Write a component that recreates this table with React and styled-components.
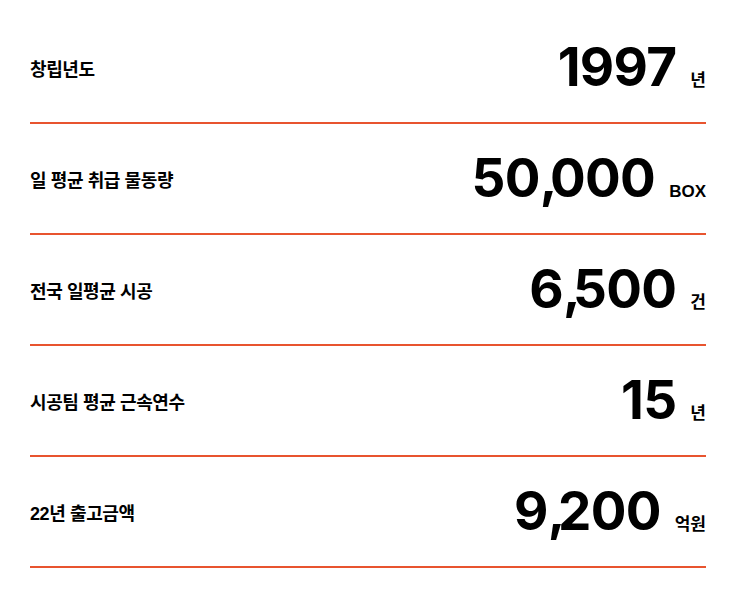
import React from "react";
import styled, { createGlobalStyle } from "styled-components";

const GlobalStyle = createGlobalStyle`
  html, body {
    margin: 0;
    padding: 0;
    background: #ffffff;
    font-family: Inter, "Noto Sans CJK KR", sans-serif;
    color: #000;
  }
`;

const stats = [
  { label: "창립년도", value: "1997", unit: "년" },
  { label: "일 평균 취급 물동량", value: "50,000", unit: "BOX" },
  { label: "전국 일평균 시공", value: "6,500", unit: "건" },
  { label: "시공팀 평균 근속연수", value: "15", unit: "년" },
  { label: "22년 출고금액", value: "9,200", unit: "억원" },
];

// commas in the number font sit tighter than Inter's default
const renderValue = (v) =>
  v.split(",").map((part, i) => (
    <React.Fragment key={i}>
      {i > 0 && <Comma>,</Comma>}
      {part}
    </React.Fragment>
  ));

export default function App() {
  return (
    <>
      <GlobalStyle />
      <List>
        {stats.map((s) => (
          <Row key={s.label}>
            <Label>{s.label}</Label>
            <Figure>
              <Value>{renderValue(s.value)}</Value>
              <Unit>{s.unit}</Unit>
            </Figure>
          </Row>
        ))}
      </List>
    </>
  );
}

const List = styled.div`
  padding: 13px 30px 0;
  display: flex;
  flex-direction: column;
`;

const Row = styled.div`
  height: 109px;
  display: flex;
  align-items: center;
  justify-content: space-between;
  border-bottom: 2px solid #e8542f;
`;

const Label = styled.span`
  font-family: "Liberation Sans", "Noto Sans CJK KR", sans-serif;
  font-size: 18px;
  font-weight: 700;
  letter-spacing: -0.4px;
`;

const Figure = styled.div`
  display: flex;
  align-items: baseline;
  gap: 14px;
`;

const Value = styled.span`
  font-family: Inter, sans-serif;
  font-size: 53px;
  font-weight: 700;
  line-height: 1;
  letter-spacing: -0.7px;
`;

const Comma = styled.span`
  letter-spacing: -7.5px;
`;

const Unit = styled.span`
  font-family: "Liberation Sans", "Noto Sans CJK KR", sans-serif;
  font-size: 17px;
  font-weight: 700;
`;
